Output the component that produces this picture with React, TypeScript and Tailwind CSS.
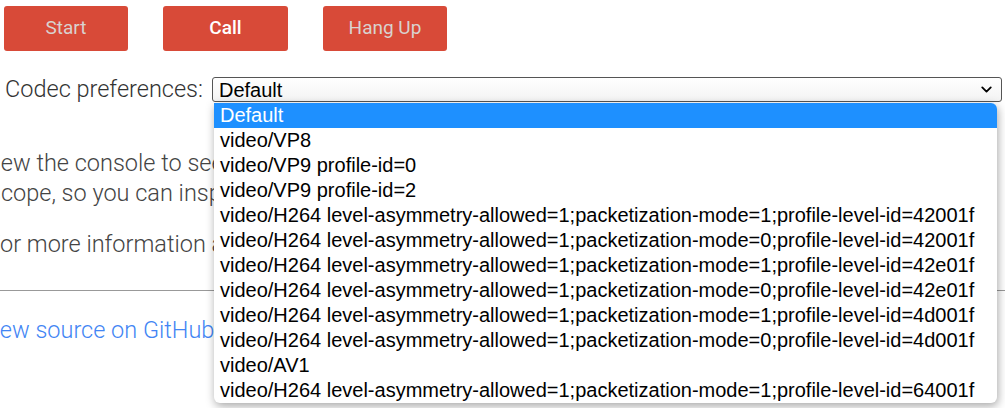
import { ChevronDown } from "lucide-react";

const codecs = [
  "Default",
  "video/VP8",
  "video/VP9 profile-id=0",
  "video/VP9 profile-id=2",
  "video/H264 level-asymmetry-allowed=1;packetization-mode=1;profile-level-id=42001f",
  "video/H264 level-asymmetry-allowed=1;packetization-mode=0;profile-level-id=42001f",
  "video/H264 level-asymmetry-allowed=1;packetization-mode=1;profile-level-id=42e01f",
  "video/H264 level-asymmetry-allowed=1;packetization-mode=0;profile-level-id=42e01f",
  "video/H264 level-asymmetry-allowed=1;packetization-mode=1;profile-level-id=4d001f",
  "video/H264 level-asymmetry-allowed=1;packetization-mode=0;profile-level-id=4d001f",
  "video/AV1",
  "video/H264 level-asymmetry-allowed=1;packetization-mode=1;profile-level-id=64001f",
];

export default function App() {
  return (
    <div className="relative h-[408px] w-[1005px] overflow-hidden bg-white font-['Roboto',sans-serif]">
      {/* Buttons */}
      <div className="flex gap-[35px] pl-[4px] pt-[6px]">
        <button className="h-[45px] w-[124px] rounded-[3px] bg-[#d84a38] text-[19px] text-[#d9d2cf]">Start</button>
        <button className="h-[45px] w-[125px] rounded-[3px] bg-[#d84a38] text-[19px] font-medium text-white">Call</button>
        <button className="h-[45px] w-[124px] rounded-[3px] bg-[#d84a38] text-[19px] text-[#d9d2cf]">Hang Up</button>
      </div>

      {/* Codec select */}
      <div className="mt-[26px] flex items-center pl-[5px]">
        <span className="w-[200px] whitespace-nowrap text-[23.5px] font-light leading-[25px] text-[#333]">Codec preferences:</span>
        <div className="ml-[7px] flex h-[25px] w-[790px] items-center justify-between rounded-[3px] border border-[#555] bg-gradient-to-b from-white to-[#f3f3f3] pl-[6px] pr-[6px] font-['Liberation_Sans',Arial,sans-serif] text-[20px] text-black">
          <span>Default</span>
          <ChevronDown className="h-[17px] w-[17px]" strokeWidth={2.6} />
        </div>
      </div>

      {/* Page text */}
      <div className="mt-[46px] text-[23.5px] font-light leading-[30px] text-[#444]">
        <p className="-ml-[19px] whitespace-nowrap">View the console to see logging. The pc1 and pc2 objects, along with the codecs, are in global</p>
        <p className="-ml-[11px] whitespace-nowrap">scope, so you can inspect them in the console as well.</p>
        <p className="-ml-[13px] mt-[21px] whitespace-nowrap">For more information about RTCPeerConnection, see Getting Started With WebRTC.</p>
        <hr className="mt-[31px] border-t border-[#999]" />
        <p className="-ml-[20px] mt-[24px] whitespace-nowrap text-[#4285f4]">View source on GitHub</p>
      </div>

      {/* Open dropdown list */}
      <ul className="absolute left-[214px] top-[103px] w-[783px] rounded-b-[6px] rounded-tr-[6px] bg-white font-['Liberation_Sans',Arial,sans-serif] text-[20px] text-black shadow-[1px_3px_10px_rgba(0,0,0,0.35)]">
        {codecs.map((c, i) => (
          <li
            key={i}
            className={
              i === 0
                ? "h-[25px] whitespace-nowrap rounded-tr-[6px] bg-[#1e90ff] pl-[6px] leading-[25px] text-white"
                : "h-[25px] whitespace-nowrap pl-[6px] leading-[25px]"
            }
          >
            {c}
          </li>
        ))}
      </ul>
    </div>
  );
}
